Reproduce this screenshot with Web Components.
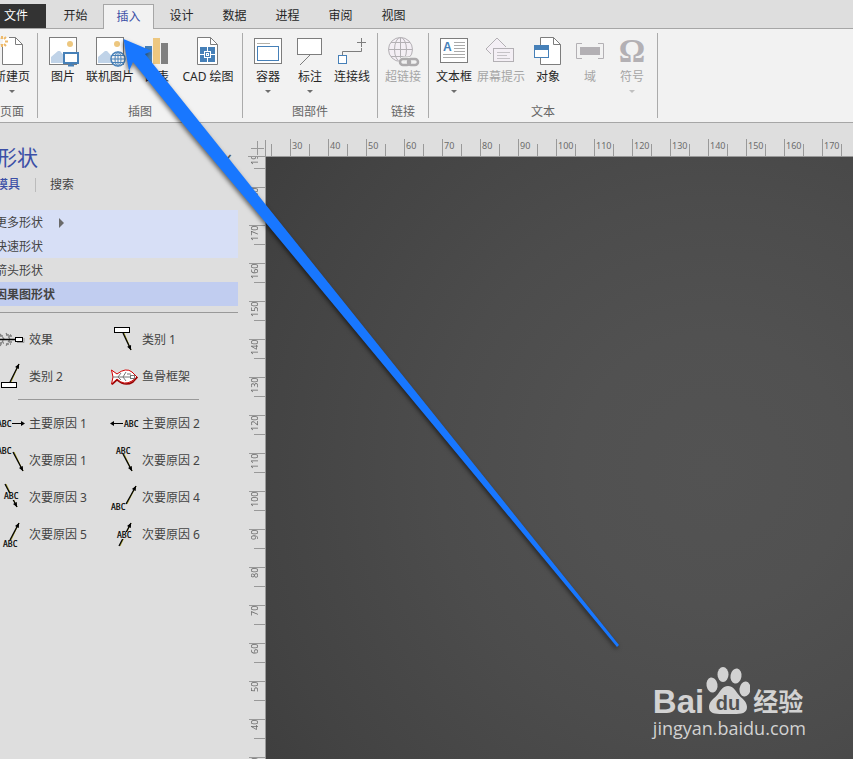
<!DOCTYPE html>
<html lang="zh-CN">
<head>
<meta charset="utf-8">
<title>因果图 - 插入</title>
<style>
html, body { margin: 0; height: 100%; }
body { font-family: "Noto Sans", "Noto Sans CJK SC", sans-serif; font-size: 12px; line-height: 16px; color: #262626; background: #dedede; overflow: hidden; }
</style>
</head>
<body>
<draw-app></draw-app>
<script>
const BLUE = '#4680b8';
const svg = (body, w = 32, h = 30) => `<svg width="${w}" height="${h}" viewBox="0 0 ${w} ${h}" fill="none" aria-hidden="true">${body}</svg>`;
const picture = `<rect x="2.5" y="1.5" width="27" height="27" fill="#fff" stroke="#7d7d7d"/><circle cx="23" cy="8" r="3" fill="#edc77f"/><path d="M4 27V21L11 15H13L24 27Z" fill="#c0d3e8"/>`;

const ICONS = {
  newpage: `<path d="M7.500 1.500H19.500L26.500 8.500V28.500H6.500V8" fill="#fff"/><path d="M13 1.500H19.500L26.500 8.500V28.500H6.500V11M19.500 1.500V8.500H26.500" stroke="#7d7d7d"/><g stroke="#edb96a" stroke-width="2"><path d="M6 0V3M6 8V11M0 5.500H3M9 5.500H12M2 1L4 3M10 1L8 3M2 10L4 8M10 10L8 8"/></g>`,
  picture: picture + `<rect x="17" y="17" width="14" height="10" fill="#fff" stroke="${BLUE}" stroke-width="2"/><path d="M24 28V30M21 29.500H27" stroke="${BLUE}" stroke-width="2"/>`,
  online: picture + `<g fill="#f2f2f2" stroke="${BLUE}"><circle cx="24" cy="23" r="7" stroke-width="1.500"/><ellipse cx="24" cy="23" rx="3" ry="7"/><path d="M17 23H31M18 19.500H30M18 26.500H30M24 16V30"/></g>`,
  chart: `<path d="M4 10H11V28H4Z" fill="${BLUE}"/><path d="M12 2H19V28H12Z" fill="#edc77f"/><path d="M20 7H27V28H20Z" fill="#808080"/>`,
  cad: `<path d="M5.500 1.500H18.500L25.500 8.500V28.500H5.500Z" fill="#fff" stroke="#7d7d7d"/><path d="M18.500 1.500V8.500H25.500" stroke="#7d7d7d"/><rect x="8" y="11" width="15" height="15" fill="${BLUE}"/><path d="M15.500 11V15M15.500 22V26M8 18.500H12M19 18.500H23" stroke="#fff"/><rect x="12.500" y="15.500" width="6" height="6" stroke="#fff"/><rect x="14.500" y="17.500" width="2" height="2" stroke="#fff"/>`,
  container: `<rect x="2.500" y="2.500" width="27" height="25" fill="#fff" stroke="#7d7d7d"/><path d="M5 7.500H18" stroke="#b5b1a8"/><rect x="5.500" y="10.500" width="21" height="14" stroke="${BLUE}"/>`,
  callout: `<rect x="3.500" y="2.500" width="24" height="16" fill="#fff" stroke="#7d7d7d"/><path d="M16 19L6 29" stroke="#7d7d7d"/>`,
  connector: `<path d="M6.500 20V15.500H25.500V12M25.500 2V11M21 6.500H30" stroke="#7d7d7d"/><rect x="2.500" y="19.500" width="8" height="8" fill="#fff" stroke="${BLUE}"/>`,
  link: `<g fill="#f4eff5" stroke="#b3b0b4"><circle cx="13.500" cy="13.500" r="12"/><ellipse cx="13.500" cy="13.500" rx="6" ry="12"/><path d="M13.500 1.500V25.500M1.500 13.500H25.500M4 6.500H23M4 20.500H23"/></g><g stroke="#f2f2f2" stroke-width="5"><rect x="14" y="23" width="10" height="6" rx="3"/><rect x="21" y="23" width="10" height="6" rx="3"/></g><g stroke="#adabad" stroke-width="2.500"><rect x="13" y="23" width="10" height="6" rx="3"/><rect x="21" y="23" width="10" height="6" rx="3"/></g>`,
  textbox: `<rect x="2.500" y="2.500" width="27" height="24" fill="#fff" stroke="#7d7d7d"/><text x="5" y="15" font-family="Liberation Sans, sans-serif" font-weight="700" font-size="12" fill="${BLUE}">A</text><path d="M16 6.500H27M16 9.500H27M16 12.500H27M16 15.500H27M5 18.500H27M5 21.500H27" stroke="#aaa"/>`,
  screentip: `<path d="M6 18L1 13L12 2L21 11" fill="#f4eff5" stroke="#b3b0b4"/><rect x="8.500" y="12.500" width="20" height="13" fill="#f4eff5" stroke="#b3b0b4" stroke-width="1"/><path d="M12 16.500H25M12 19.500H22M12 22.500H25" stroke="#c5c2c6"/>`,
  object: `<path d="M8.500 1.500H21.500L28.500 8.500V28.500H8.500Z" fill="#fff" stroke="#7d7d7d"/><path d="M21.500 1.500V8.500H28.500" stroke="#7d7d7d"/><rect x="2.500" y="9.500" width="14" height="12" fill="#fff" stroke="${BLUE}"/><path d="M2 9H17V14H2Z" fill="${BLUE}"/>`,
  field: `<path d="M8 7.500H2.500V22.500H8M24 7.500H29.500V22.500H24" stroke="#b3b0b4"/><path d="M6 11H26V19H6Z" fill="#b3b0b4"/>`,
  omega: `<text x="16" y="26" text-anchor="middle" font-family="Liberation Serif, serif" font-weight="700" font-size="33" fill="#b3b0b4">Ω</text>`
};

const line = (x1, y1, x2, y2) => {
  const a = Math.atan2(y2 - y1, x2 - x1), p = s => `${x2 - 5 * Math.cos(a + .45 * s)} ${y2 - 5 * Math.sin(a + .45 * s)}`;
  return `<path d="M${x1 + 1} ${y1}L${x2} ${y2}" stroke="#a8a020" stroke-width="1"/><path d="M${x1} ${y1}L${x2} ${y2}" stroke="#000" stroke-width="1.300"/><path d="M${x2} ${y2}L${p(1)}L${p(-1)}Z" fill="#000"/>`;
};
const abc = (x, y) => `<text x="${x}" y="${y}" font-family="DejaVu Sans Mono, monospace" font-size="8" fill="#000" stroke="#000" stroke-width=".2">ABC</text>`;
const box = (x, y) => `<rect x="${x + .5}" y="${y + .5}" width="15" height="5" fill="#fff" stroke="#000"/>`;
const SHAPES = {
  effect: `<path d="M5 11L9 16L5 23M11 10L15 16L11 23M5 13H9M11 12H16M4 20H9M11 21H16M14 19H18M14 13H18" stroke="#808080" stroke-width="1.300" stroke-dasharray="3 1"/><path d="M0 16.500H20" stroke="#000" stroke-width="1.500"/><path d="M22 19.500H29V15" stroke="#999"/><rect x="20.500" y="14.500" width="7" height="4" fill="#fff" stroke="#000"/>`,
  cat1: line(15, 10, 23, 27) + box(6, 4),
  cat2: line(15, 22, 24, 4) + box(6, 22),
  fish: `<path d="M3.500 10L9 14Q18 7 24 12L29 17L24 21Q16 26 9 19L3.500 24L5 17Z" fill="#fff" stroke="#d40000"/><path d="M4 24.500L9 20Q17 27 25 22L29.500 17" stroke="#9a0000" stroke-width="1.500"/><path d="M5 17H24M10 17L13 13M15 17L18 12M10 17L13 20M15 17L18 21M19 14H23" stroke="#777"/><rect x="22.500" y="15.500" width="4" height="3" fill="#fff" stroke="#777"/>`,
  main1: abc(2, 20) + `<path d="M17 16.500H28" stroke="#000" stroke-width="1"/><path d="M30 16.500L26 14V19Z" fill="#000"/>`,
  main2: abc(16, 20) + `<path d="M4 16.500H15" stroke="#000" stroke-width="1"/><path d="M2 16.500L6 14V19Z" fill="#000"/>`,
  sub1: abc(2, 10) + line(18, 8, 28, 27),
  sub2: abc(8, 10) + line(15, 10, 24, 27),
  sub3: line(10, 3, 22, 26) + `<path d="M9 12H25V19H9Z" fill="#dedede"/>` + abc(9, 18),
  sub4: line(18, 23, 28, 5) + abc(3, 29),
  sub5: line(15, 22, 24, 5) + abc(8, 29),
  sub6: line(11, 28, 23, 5) + `<path d="M9 14H25V21H9Z" fill="#dedede"/>` + abc(9, 20)
};

function define(name, html) {
  const t = document.createElement('template');
  customElements.define(name, class extends HTMLElement {
    constructor() {
      super();
      t.innerHTML = typeof html === 'function' ? html(this) : html;
      this.attachShadow({ mode: 'open' }).append(t.content.cloneNode(true));
    }
  });
}
const RESET = `button { font: inherit; color: inherit; background: none; border: 0; padding: 0; margin: 0; cursor: pointer; }`;

define('ribbon-tab', `<style>${RESET}
:host { display: block; width: 51px; margin: 4px 1px 0; height: 25px; }
button { width: 100%; height: 100%; box-sizing: border-box; padding-bottom: 1px; }
:host([active]) { position: relative; z-index: 1; color: #3b4fa6; }
:host([active]) button { background: #f2f2f2; border: 1px solid #a6a6a6; border-bottom: 0; }
:host([file]) { width: 46px; height: 24px; margin: 4px 3px 0 0; color: #fff; }
:host([file]) button { background: #333; text-align: left; padding-left: 4px; }
</style><button type="button" role="tab"><slot></slot></button>`);

define('ribbon-button', el => `<style>${RESET}
:host { display: block; width: 42px; }
:host([size="wide"]) { width: 52px; }
:host([size="cad"]) { width: 60px; }
button { display: flex; flex-direction: column; align-items: center; width: 100%; white-space: nowrap; }
button:disabled { color: #a5a5a5; }
svg { display: block; margin-bottom: 3px; flex: none; overflow: visible; }
i { border: 3px solid transparent; border-top-color: currentColor; border-bottom: 0; margin-top: 5px; opacity: .65; }
</style><button type="button" ${el.hasAttribute('muted') ? 'disabled' : ''}>${svg(ICONS[el.getAttribute('icon')])}<span><slot></slot></span>${el.hasAttribute('menu') ? '<i></i>' : ''}</button>`);

define('ribbon-group', el => `<style>
:host { display: flex; flex-direction: column; justify-content: space-between; padding: 3px 4px 0; border-right: 1px solid #ababab; }
div { display: flex; }
p { margin: 0; text-align: center; line-height: 12px; color: #666; }
</style><div><slot></slot></div><p>${el.getAttribute('label')}</p>`);

define('ribbon-bar', `<style>
:host { display: block; }
nav { display: flex; height: 29px; box-shadow: inset 0 -1px #a6a6a6; }
section { display: flex; overflow: hidden; height: 85px; padding: 4px 0; border-bottom: 1px solid #a6a6a6; background: #f2f2f2; }
section ribbon-group:first-child { margin-left: -13px; }
</style>
<nav role="tablist">
<ribbon-tab file>文件</ribbon-tab><ribbon-tab>开始</ribbon-tab><ribbon-tab active>插入</ribbon-tab><ribbon-tab>设计</ribbon-tab><ribbon-tab>数据</ribbon-tab><ribbon-tab>进程</ribbon-tab><ribbon-tab>审阅</ribbon-tab><ribbon-tab>视图</ribbon-tab>
</nav>
<section>
<ribbon-group label="页面"><ribbon-button icon="newpage" menu>新建页</ribbon-button></ribbon-group>
<ribbon-group label="插图"><ribbon-button icon="picture">图片</ribbon-button><ribbon-button icon="online" size="wide">联机图片</ribbon-button><ribbon-button icon="chart">图表</ribbon-button><ribbon-button icon="cad" size="cad">CAD 绘图</ribbon-button></ribbon-group>
<ribbon-group label="图部件"><ribbon-button icon="container" menu>容器</ribbon-button><ribbon-button icon="callout" menu>标注</ribbon-button><ribbon-button icon="connector">连接线</ribbon-button></ribbon-group>
<ribbon-group label="链接"><ribbon-button icon="link" muted>超链接</ribbon-button></ribbon-group>
<ribbon-group label="文本"><ribbon-button icon="textbox" menu>文本框</ribbon-button><ribbon-button icon="screentip" size="wide" muted>屏幕提示</ribbon-button><ribbon-button icon="object">对象</ribbon-button><ribbon-button icon="field" muted>域</ribbon-button><ribbon-button icon="omega" muted menu>符号</ribbon-button></ribbon-group>
</section>`);

define('stencil-row', el => `<style>${RESET}
:host { display: block; height: 24px; }
:host([tone="light"]) { background: #d7dff6; }
:host([tone="strong"]) { background: #c1cdf0; font-weight: 700; }
button { display: flex; align-items: center; gap: 16px; width: 100%; height: 100%; padding-top: 2px; }
i { border: 5px solid transparent; border-left-color: #6a6a6a; border-right: 0; }
</style><button type="button"><slot></slot>${el.hasAttribute('more') ? '<i></i>' : ''}</button>`);

define('shape-item', el => `<style>${RESET}
:host { display: block; }
button { display: flex; align-items: center; gap: 2px; height: 37px; white-space: nowrap; }
svg { display: block; flex: none; overflow: visible; }
span { padding-top: 2px; }
</style><button type="button">${svg(SHAPES[el.getAttribute('icon')], 32, 32)}<span><slot></slot></span></button>`);

define('shapes-panel', `<style>${RESET}
:host { display: block; overflow: hidden; color: #444; }
main { margin: 0 7px 0 -5px; }
header { display: flex; align-items: center; justify-content: space-between; height: 28px; padding: 20px 6px 2px 1px; }
h2 { margin: 0; font-size: 21px; line-height: 28px; font-weight: 400; color: #3b4fa6; }
header button { font-size: 20px; line-height: 20px; color: #555; }
nav { display: flex; align-items: center; height: 24px; padding-left: 1px; margin-bottom: 13px; }
nav button:first-child { color: #3b4fa6; font-weight: 500; }
nav span { width: 1px; height: 14px; margin: 0 14px 0 15px; background: #bbb; }
.grid { display: grid; grid-template-columns: 113px 113px; }
hr { border: 0; height: 1px; background: #999; margin: 6px 0 7px; }
hr.inner { margin: 5px 39px 4px 23px; }
</style>
<main>
<header><h2>形状</h2><button type="button" aria-label="折叠">‹</button></header>
<nav><button type="button">模具</button><span></span><button type="button">搜索</button></nav>
<stencil-row tone="light" more>更多形状</stencil-row><stencil-row tone="light">快速形状</stencil-row><stencil-row>箭头形状</stencil-row><stencil-row tone="strong">因果图形状</stencil-row>
<hr>
<div class="grid"><shape-item icon="effect">效果</shape-item><shape-item icon="cat1">类别 1</shape-item><shape-item icon="cat2">类别 2</shape-item><shape-item icon="fish">鱼骨框架</shape-item></div>
<hr class="inner">
<div class="grid"><shape-item icon="main1">主要原因 1</shape-item><shape-item icon="main2">主要原因 2</shape-item><shape-item icon="sub1">次要原因 1</shape-item><shape-item icon="sub2">次要原因 2</shape-item><shape-item icon="sub3">次要原因 3</shape-item><shape-item icon="sub4">次要原因 4</shape-item><shape-item icon="sub5">次要原因 5</shape-item><shape-item icon="sub6">次要原因 6</shape-item></div>
</main>`);

define('ruler-strip', el => {
  const vertical = el.hasAttribute('vertical');
  const count = Math.ceil((vertical ? innerHeight - 149 : innerWidth - 252) / 38);
  const from = +el.getAttribute('from'), step = vertical ? -10 : 10;
  let cells = '';
  for (let i = 0; i < count; i++) cells += `<li><b></b><span>${from + i * step}</span><b class="half"></b></li>`;
  return `<style>
:host { display: block; overflow: hidden; font-size: 9px; line-height: 12px; color: #6c6c6c; min-width: 0; min-height: 0; }
ul { display: flex; list-style: none; margin: 0; padding: 0; }
li { display: flex; flex: none; width: 38px; height: 17px; align-items: flex-end; }
b { flex: none; background: #999; width: 1px; height: 17px; }
.half { height: 12px; }
span { width: 18px; padding-bottom: 4px; text-indent: 1px; white-space: nowrap; }
:host(:not([vertical])) { border-bottom: 1px solid #999; }
:host(:not([vertical])) ul { margin-left: -14px; }
:host([vertical]) { border-right: 1px solid #999; }
:host([vertical]) ul { flex-direction: column; margin-top: -8px; }
:host([vertical]) li { flex-direction: column; width: 17px; height: 38px; }
:host([vertical]) b { height: 1px; width: 16px; }
:host([vertical]) .half { width: 11px; }
:host([vertical]) span { width: auto; height: 18px; padding: 0 1px 0 0; text-indent: 0; text-align: right; writing-mode: vertical-rl; transform: rotate(180deg); align-self: flex-start; box-sizing: border-box; }
</style><ul>${cells}</ul>`;
});

define('baidu-mark', `<style>
:host { display: block; color: #d2d2d2; }
div { display: flex; align-items: flex-end; height: 48px; }
.bai { font: 700 33px/30px "Liberation Sans", sans-serif; }
.jy { font: 700 25px/34px "Noto Sans CJK SC", sans-serif; margin-left: 3px; }
svg { display: block; margin-bottom: 2px; }
p { margin: 0; font: 18px/22px "Open Sans", sans-serif; }
</style>
<div><span class="bai">Bai</span>${svg(`<g fill="#d2d2d2"><ellipse cx="8" cy="18" rx="5.500" ry="7.500" transform="rotate(-10 8 18)"/><ellipse cx="19" cy="7.500" rx="5.500" ry="7.500"/><ellipse cx="32" cy="9" rx="5.500" ry="7.500" transform="rotate(10 32 9)"/><ellipse cx="41" cy="22" rx="5.500" ry="7.500" transform="rotate(8 41 22)"/><path d="M24 19C29 19 31 23 34 27C37 31 43 34 43 40C43 48 34 47 24 47C14 47 5 48 5 40C5 34 11 31 14 27C17 23 19 19 24 19Z"/></g><text x="24" y="43" text-anchor="middle" font-family="Liberation Sans, sans-serif" font-weight="700" font-size="20" fill="#505050">du</text>`, 46, 48)}<span class="jy">经验</span></div>
<p>jingyan.baidu.com</p>`);

define('draw-canvas', `<style>
:host { display: block; position: relative; background: radial-gradient(circle at 76% 52%, #535353 0, #515151 25%, #4c4c4c 50%, #434343 84%, #3e3e3e 100%); min-width: 0; }
baidu-mark { position: absolute; right: 47px; bottom: 20px; }
</style><baidu-mark></baidu-mark>`);

define('pointer-arrow', `<style>
:host { display: block; position: absolute; top: 0; left: 0; z-index: 5; pointer-events: none; }
svg { display: block; filter: drop-shadow(-1px 2px 2px rgba(0,0,0,.55)); }
</style>${svg('<path d="M123.500 39L152 51L145 54L206 130L266 205L619 645L617 647L266 223L188 130L133 62L129 71Z" fill="#1877ff"/>', 640, 670)}`);

define('draw-app', `<style>
:host { display: flex; flex-direction: column; height: 100vh; position: relative; overflow: hidden; }
.work { flex: 1; display: grid; grid-template-columns: 245px 21px 1fr; grid-template-rows: 34px 1fr; min-height: 0; }
shapes-panel { grid-row: 1 / 3; }
.corner { display: flex; align-items: flex-end; justify-content: flex-end; border-bottom: 1px solid #999; border-image: linear-gradient(90deg, transparent 4px, #999 4px) 1; }
.corner svg { display: block; }
.top { align-self: end; }
.side { margin-left: 3px; }
</style>
<ribbon-bar></ribbon-bar>
<div class="work">
<shapes-panel></shapes-panel>
<div class="corner">${svg('<path d="M7.500 1V15M1 8.500H14M15.500 0V17" stroke="#999"/>', 16, 16)}</div>
<ruler-strip class="top" from="20"></ruler-strip>
<ruler-strip class="side" vertical from="190"></ruler-strip>
<draw-canvas></draw-canvas>
</div>
<pointer-arrow></pointer-arrow>`);
</script>
</body>
</html>
